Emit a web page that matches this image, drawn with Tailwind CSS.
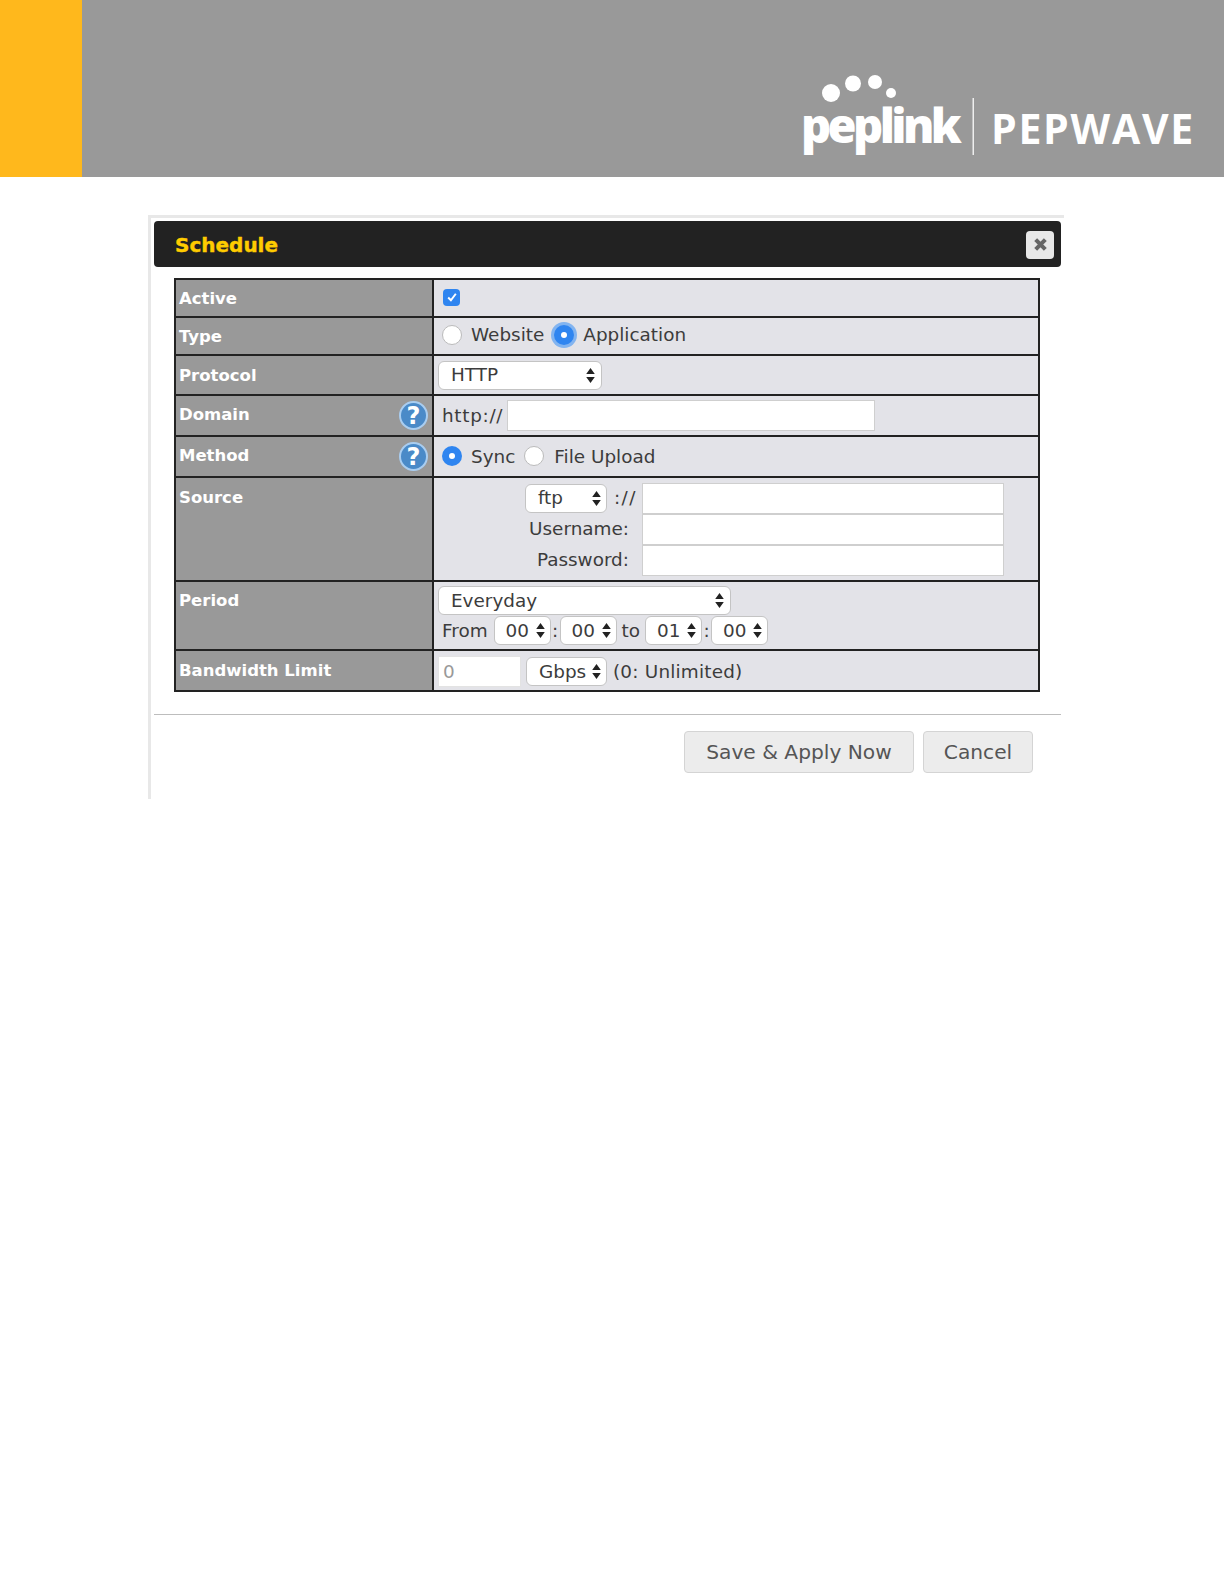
<!DOCTYPE html>
<html><head><meta charset="utf-8"><script src="https://cdn.jsdelivr.net/npm/@tailwindcss/browser@4"></script></head>
<body class="bg-white font-['DejaVu_Sans',sans-serif] text-[#3c3c3c]">
<svg class="hidden"><symbol id="arr" viewBox="0 0 8 14"><path d="M4 0 8 5.600H0zM4 14 0 8.400h8z" fill="#222"/></symbol></svg>
<header class="h-[177px] bg-[#999999] flex">
  <div class="w-[82px] bg-[#ffb81c]"></div>
  <div class="ml-auto relative w-[440px] h-full">
    <svg class="absolute left-0 top-0" width="440" height="177" viewBox="784 0 440 177"><g fill="#fff"><circle cx="831" cy="93" r="9"/><circle cx="853" cy="83.500" r="8"/><circle cx="875" cy="82" r="7"/><circle cx="891" cy="93" r="5"/></g><rect x="972.500" y="98" width="1.500" height="57" fill="#eee"/></svg>
    <div class="absolute left-[17px] top-[92px] text-white font-['Open_Sans',sans-serif] font-extrabold text-[47px] leading-[66px] tracking-[-3.600px]">peplink</div>
    <div class="absolute left-[207px] top-[100px] text-white font-['Open_Sans',sans-serif] font-bold text-[41px] leading-[56px] tracking-[1.700px]">PEPWAVE</div>
  </div>
</header>

<main class="ml-[148px] mt-[38px] w-[916px] h-[584px] border-l-[3px] border-t-[3px] border-[#e8e8e8] pl-[3px] pt-[3px]">
  <div class="w-[907px] h-[46px] bg-[#222222] rounded-[4px] flex items-center justify-between pl-[21px] pr-[7px] pt-[1px]">
    <h1 class="font-bold text-[20px] text-[#ffcc00] [-webkit-text-stroke:0.4px_#ffcc00]">Schedule</h1>
    <button class="w-[28px] h-[28px] rounded-[4px] bg-[#e8e8e8] flex items-center justify-center">
      <svg width="15" height="15" viewBox="0 0 14 14"><path d="M2.500 2.500 11.500 11.500M11.500 2.500 2.500 11.500" stroke="#666" stroke-width="3.800"/></svg>
    </button>
  </div>

  <table class="ml-[20px] mt-[11px] w-[866px] table-fixed border-collapse border-2 border-[#222222] text-[18.400px]">
    <colgroup><col class="w-[258px]"><col></colgroup>
    <tbody>
      <tr class="h-[38px]">
        <th class="border-2 border-[#222222] bg-[#999999] text-left align-middle pt-[2px] pl-[3px] text-white text-[16.500px] font-bold">Active</th>
        <td class="border-2 border-[#222222] bg-[#e3e3e8] pl-[9px]">
          <div class="w-[17px] h-[17px] rounded-[4px] bg-[#2f85f0] flex items-center justify-center -translate-y-px"><svg width="12" height="12" viewBox="0 0 11 11"><path d="M2 6 4.500 8.500 9 2.500" fill="none" stroke="#fff" stroke-width="1.800"/></svg></div>
        </td>
      </tr>
      <tr class="h-[38px]">
        <th class="border-2 border-[#222222] bg-[#999999] text-left pt-[2px] pl-[3px] text-white text-[16.500px] font-bold">Type</th>
        <td class="border-2 border-[#222222] bg-[#e3e3e8] pl-[8px]">
          <div class="flex items-center -translate-y-px">
            <span class="w-[20px] h-[20px] rounded-full bg-white border border-[#bbb]"></span>
            <span class="ml-[9px]">Website</span>
            <span class="ml-[10px] w-[20px] h-[20px] rounded-full bg-[#2f85f0] flex items-center justify-center shadow-[0_0_0_3px_#82b4f0]"><span class="w-[6px] h-[6px] rounded-full bg-white"></span></span>
            <span class="ml-[9px]">Application</span>
          </div>
        </td>
      </tr>
      <tr class="h-[40px]">
        <th class="border-2 border-[#222222] bg-[#999999] text-left pt-[2px] pl-[3px] text-white text-[16.500px] font-bold">Protocol</th>
        <td class="border-2 border-[#222222] bg-[#e3e3e8] pl-[4px]">
          <div class="w-[164px] h-[29px] rounded-[6px] bg-white border border-[#c4c4c4] flex items-center justify-between pl-[12px] pr-[6px]"><span>HTTP</span><svg width="9" height="15"><use href="#arr"/></svg></div>
        </td>
      </tr>
      <tr class="h-[41px]">
        <th class="border-2 border-[#222222] bg-[#999999] text-left pl-[3px] text-white text-[16.500px] font-bold">
          <div class="flex items-center justify-between pr-[4px]"><span>Domain</span><span class="w-[29px] h-[29px] rounded-full bg-[#4a8ac8] border-2 border-[#a9cdf0] flex items-center justify-center text-[24px] leading-none">?</span></div>
        </th>
        <td class="border-2 border-[#222222] bg-[#e3e3e8] pl-[8px]">
          <div class="flex items-center"><span class="tracking-[0.700px]">http://</span><span class="ml-[4px] w-[368px] h-[31px] bg-white border border-[#cfcfcf]"></span></div>
        </td>
      </tr>
      <tr class="h-[41px]">
        <th class="border-2 border-[#222222] bg-[#999999] text-left pl-[3px] text-white text-[16.500px] font-bold">
          <div class="flex items-center justify-between pr-[4px]"><span>Method</span><span class="w-[29px] h-[29px] rounded-full bg-[#4a8ac8] border-2 border-[#a9cdf0] flex items-center justify-center text-[24px] leading-none">?</span></div>
        </th>
        <td class="border-2 border-[#222222] bg-[#e3e3e8] pl-[8px]">
          <div class="flex items-center">
            <span class="w-[20px] h-[20px] rounded-full bg-[#2f85f0] flex items-center justify-center"><span class="w-[6px] h-[6px] rounded-full bg-white"></span></span>
            <span class="ml-[9px]">Sync</span>
            <span class="ml-[9px] w-[20px] h-[20px] rounded-full bg-white border border-[#bbb]"></span>
            <span class="ml-[10px]">File Upload</span>
          </div>
        </td>
      </tr>
      <tr class="h-[104px]">
        <th class="border-2 border-[#222222] bg-[#999999] text-left align-top pt-[8px] pl-[3px] text-white text-[16.500px] font-bold">Source</th>
        <td class="border-2 border-[#222222] bg-[#e3e3e8]">
          <div class="grid grid-cols-[208px_362px] items-center">
            <div class="flex items-center justify-end h-[31px]">
              <div class="w-[82px] h-[29px] rounded-[6px] bg-white border border-[#c4c4c4] flex items-center justify-between pl-[12px] pr-[5px]"><span>ftp</span><svg width="9" height="15"><use href="#arr"/></svg></div>
              <span class="ml-[7px] mr-[5px] tracking-[1.500px]">://</span>
            </div>
            <div class="w-[362px] h-[31px] bg-white border border-[#cfcfcf]"></div>
            <div class="text-right pr-[13px]">Username:</div>
            <div class="w-[362px] h-[31px] bg-white border border-[#cfcfcf]"></div>
            <div class="text-right pr-[13px]">Password:</div>
            <div class="w-[362px] h-[31px] bg-white border border-[#cfcfcf]"></div>
          </div>
        </td>
      </tr>
      <tr class="h-[69px]">
        <th class="border-2 border-[#222222] bg-[#999999] text-left align-top pt-[7px] pl-[3px] text-white text-[16.500px] font-bold">Period</th>
        <td class="border-2 border-[#222222] bg-[#e3e3e8] pl-[4px]">
          <div class="w-[293px] h-[29px] rounded-[6px] bg-white border border-[#c4c4c4] flex items-center justify-between pl-[12px] pr-[6px]"><span>Everyday</span><svg width="9" height="15"><use href="#arr"/></svg></div>
          <div class="flex items-center mt-[1px] pl-[4px]">
            <span>From</span>
            <div class="ml-[6px] w-[57px] h-[29px] rounded-[6px] bg-white border border-[#c4c4c4] flex items-center justify-between pl-[11px] pr-[5px]"><span>00</span><svg width="9" height="15"><use href="#arr"/></svg></div>
            <span class="w-[9px] text-center">:</span>
            <div class="w-[57px] h-[29px] rounded-[6px] bg-white border border-[#c4c4c4] flex items-center justify-between pl-[11px] pr-[5px]"><span>00</span><svg width="9" height="15"><use href="#arr"/></svg></div>
            <span class="ml-[5px]">to</span>
            <div class="ml-[5px] w-[57px] h-[29px] rounded-[6px] bg-white border border-[#c4c4c4] flex items-center justify-between pl-[11px] pr-[5px]"><span>01</span><svg width="9" height="15"><use href="#arr"/></svg></div>
            <span class="w-[9px] text-center">:</span>
            <div class="w-[57px] h-[29px] rounded-[6px] bg-white border border-[#c4c4c4] flex items-center justify-between pl-[11px] pr-[5px]"><span>00</span><svg width="9" height="15"><use href="#arr"/></svg></div>
          </div>
        </td>
      </tr>
      <tr class="h-[41px]">
        <th class="border-2 border-[#222222] bg-[#999999] text-left pt-[2px] pl-[3px] text-white text-[16.500px] font-bold">Bandwidth Limit</th>
        <td class="border-2 border-[#222222] bg-[#e3e3e8] pl-[4px] pt-[2px]">
          <div class="flex items-center">
            <div class="w-[83px] h-[31px] bg-white border border-[#e3e3e3] pl-[4px] text-[#999] leading-[29px]">0</div>
            <div class="ml-[5px] w-[81px] h-[29px] rounded-[6px] bg-white border border-[#c4c4c4] flex items-center justify-between pl-[12px] pr-[5px]"><span>Gbps</span><svg width="9" height="15"><use href="#arr"/></svg></div>
            <span class="ml-[6px] tracking-[0.200px]">(0: Unlimited)</span>
          </div>
        </td>
      </tr>
    </tbody>
  </table>

  <div class="w-[907px] mt-[22px] border-t border-[#bdbdbd] flex justify-end gap-[9px] pt-[16px] pr-[28px]">
    <button class="w-[230px] h-[42px] rounded-[4px] bg-[#ececec] border border-[#d4d4d4] text-[20.200px] text-[#555]">Save &amp; Apply Now</button>
    <button class="w-[110px] h-[42px] rounded-[4px] bg-[#ececec] border border-[#d4d4d4] text-[20.200px] text-[#555]">Cancel</button>
  </div>
</main>
</body></html>
